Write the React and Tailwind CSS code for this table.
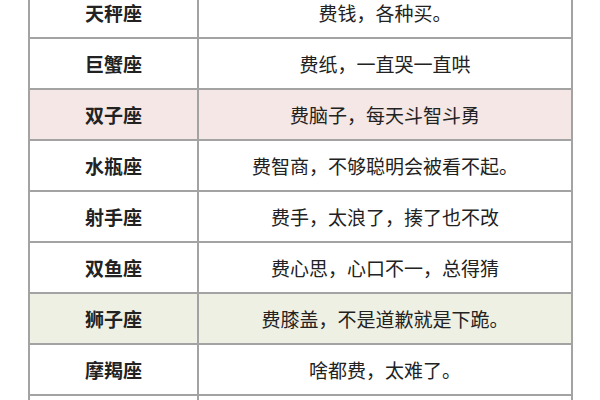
import React from "react";

const rows = [
  { sign: "天秤座", text: "费钱，各种买。", bg: "bg-white" },
  { sign: "巨蟹座", text: "费纸，一直哭一直哄", bg: "bg-white" },
  { sign: "双子座", text: "费脑子，每天斗智斗勇", bg: "bg-[#f4e7e5]" },
  { sign: "水瓶座", text: "费智商，不够聪明会被看不起。", bg: "bg-white" },
  { sign: "射手座", text: "费手，太浪了，揍了也不改", bg: "bg-white" },
  { sign: "双鱼座", text: "费心思，心口不一，总得猜", bg: "bg-white" },
  { sign: "狮子座", text: "费膝盖，不是道歉就是下跪。", bg: "bg-[#eef0e4]" },
  { sign: "摩羯座", text: "啥都费，太难了。", bg: "bg-white" },
  { sign: "", text: "", bg: "bg-white" },
];

export default function App() {
  return (
    <div
      className="w-[600px] h-[400px] overflow-hidden bg-white text-[#222]"
      style={{ fontFamily: '"Noto Sans CJK SC", "Noto Sans", sans-serif' }}
    >
      <div className="ml-[28px] mt-[-12px] w-[545px] border-x-2 border-[#a3a3a3]">
        {rows.map((r, i) => (
          <div
            key={i}
            className={`grid grid-cols-[169px_1fr] h-[51px] border-b-2 border-[#a3a3a3] ${r.bg}`}
          >
            <div className="flex items-center justify-center border-r-2 border-[#a3a3a3] text-[19px] font-bold leading-none">
              {r.sign}
            </div>
            <div className="flex items-center justify-center text-[19px] leading-none">
              {r.text}
            </div>
          </div>
        ))}
      </div>
    </div>
  );
}
